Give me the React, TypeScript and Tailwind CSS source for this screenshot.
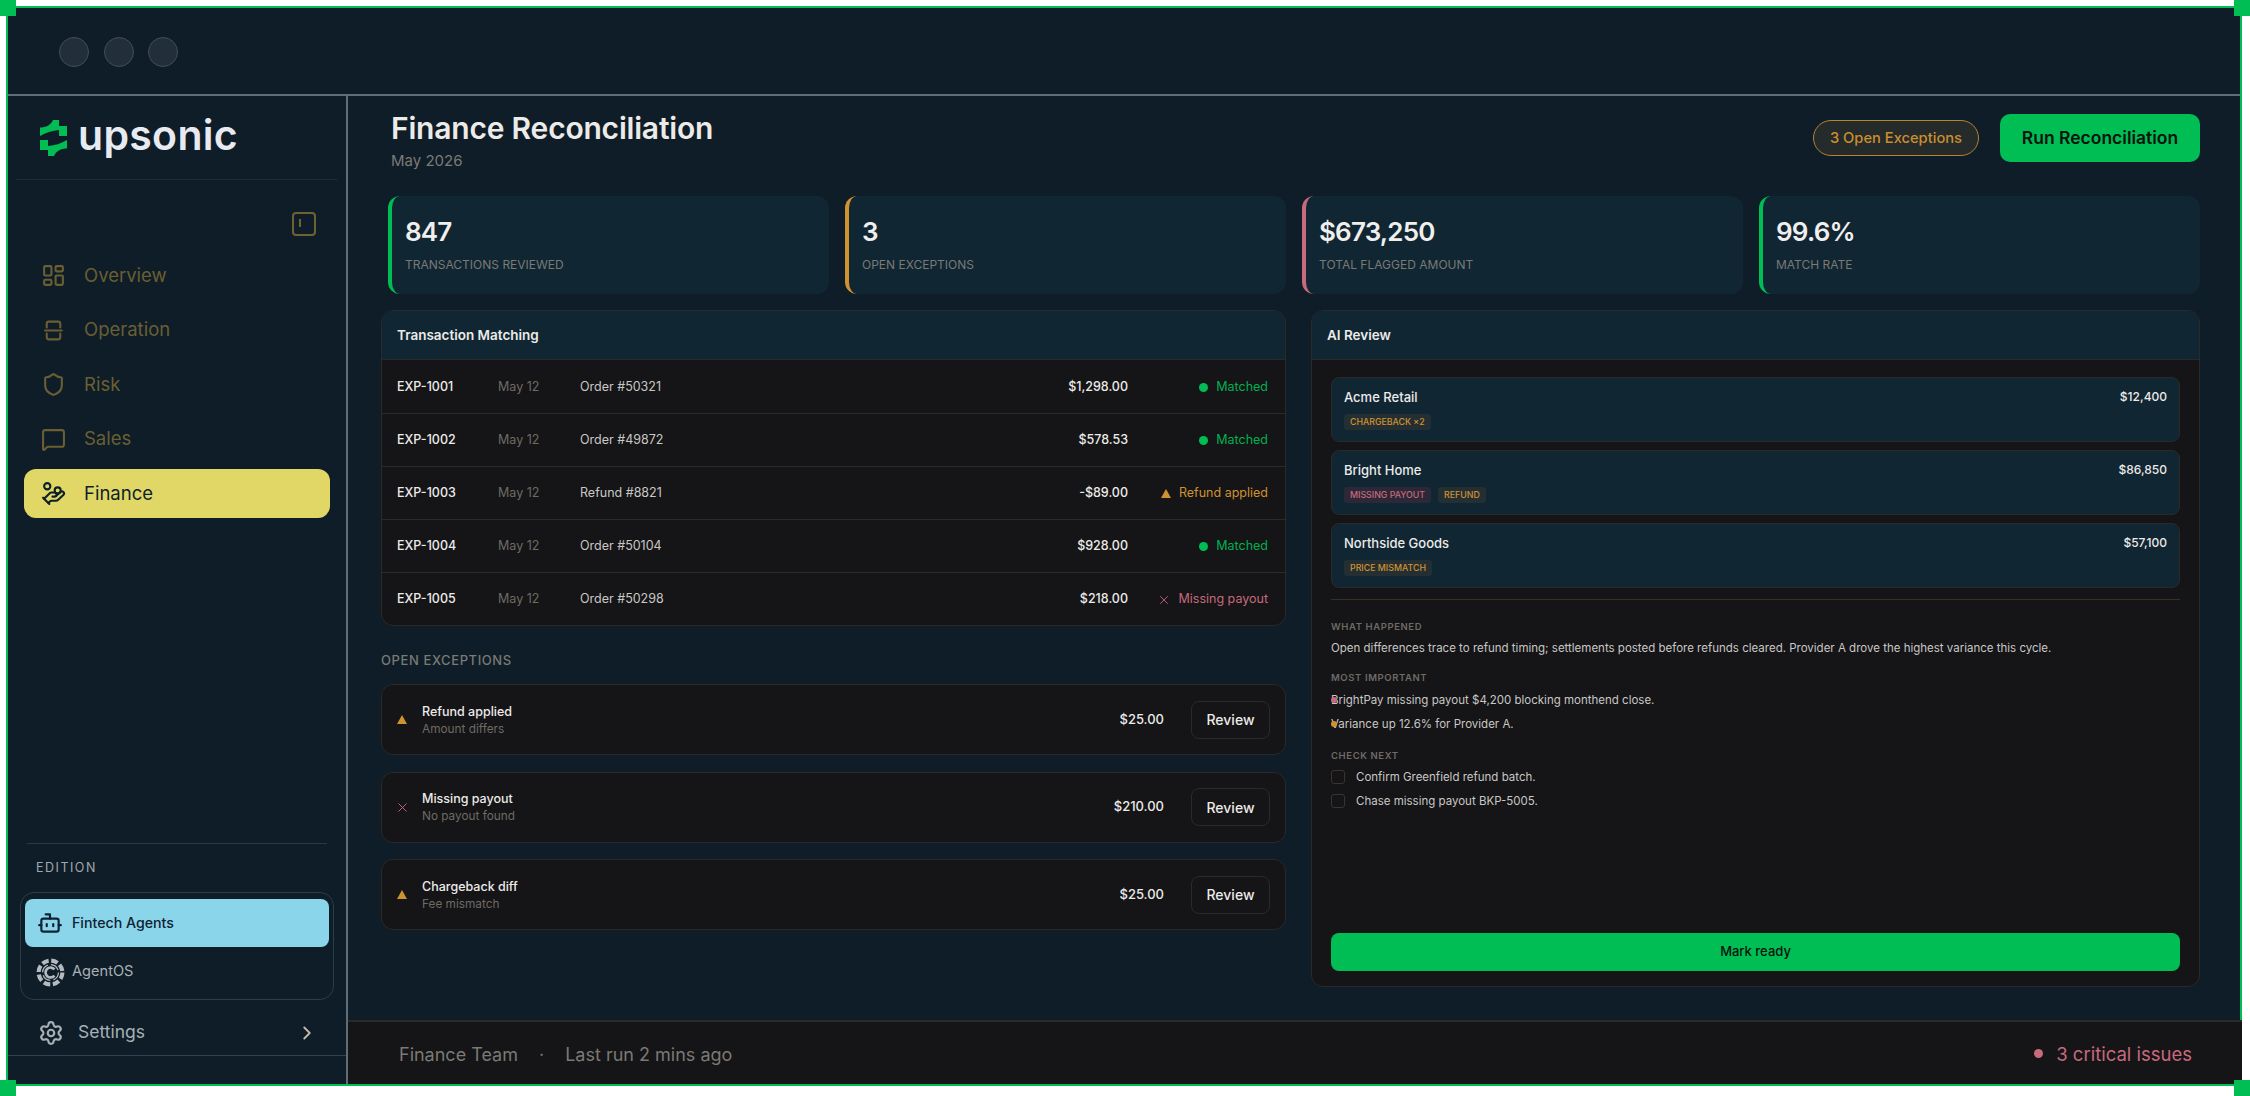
import React from 'react';
import { Bot, ChevronRight, HandCoins, LayoutDashboard, MessageSquare, Settings, Shield, X } from 'lucide-react';

const OperationIcon = ({ className }: { className?: string }) => (
  <svg viewBox="0 0 24 24" fill="none" stroke="currentColor" strokeWidth="2" strokeLinecap="round" strokeLinejoin="round" className={className}>
    <path d="M5.5 9V5.5a2 2 0 0 1 2-2h9a2 2 0 0 1 2 2V9" />
    <path d="M4 12h16" />
    <path d="M5.5 15v3.5a2 2 0 0 0 2 2h9a2 2 0 0 0 2-2V15" />
  </svg>
);

const LogoMark = () => (
  <svg viewBox="0 0 27 36" className="w-[27px] h-[36px]" fill="#00bd54">
    <path d="M0 7.5C6 7.5 11 5 13 0H19V6H27V16H19V10C12 10.5 6 12.5 0 16Z" />
    <path d="M27 28.5C21 28.5 16 31 14 36H8V30H0V20H8V26C15 25.5 21 23.5 27 20Z" />
  </svg>
);

const AgentOsIcon = () => (
  <svg viewBox="0 0 28 28" className="w-[29px] h-[29px]" fill="none" stroke="#b4bac0">
    <circle cx="14" cy="14" r="11.5" strokeWidth="4" strokeDasharray="6.5 2.6" />
    <circle cx="14" cy="14" r="7.6" strokeWidth="1.2" strokeDasharray="9 3" />
    <path d="M17.8 11a4.8 4.8 0 1 0 0 6" strokeWidth="2.6" />
  </svg>
);

const Triangle = ({ className }: { className?: string }) => (
  <span className={`w-0 h-0 border-l-[5px] border-r-[5px] border-b-[9px] border-l-transparent border-r-transparent border-b-[#cf9230] ${className ?? ''}`} />
);

const navItems = [
  { label: 'Overview', Icon: LayoutDashboard },
  { label: 'Operation', Icon: OperationIcon },
  { label: 'Risk', Icon: Shield },
  { label: 'Sales', Icon: MessageSquare },
];

const stats = [
  { value: '847', label: 'Transactions reviewed', border: 'border-l-[#00bd54]' },
  { value: '3', label: 'Open exceptions', border: 'border-l-[#cf9230]' },
  { value: '$673,250', label: 'Total flagged amount', border: 'border-l-[#c76a7c]' },
  { value: '99.6%', label: 'Match rate', border: 'border-l-[#00bd54]' },
];

const transactions = [
  { id: 'EXP-1001', desc: 'Order #50321', amount: '$1,298.00', status: 'Matched', kind: 'ok' },
  { id: 'EXP-1002', desc: 'Order #49872', amount: '$578.53', status: 'Matched', kind: 'ok' },
  { id: 'EXP-1003', desc: 'Refund #8821', amount: '-$89.00', status: 'Refund applied', kind: 'warn' },
  { id: 'EXP-1004', desc: 'Order #50104', amount: '$928.00', status: 'Matched', kind: 'ok' },
  { id: 'EXP-1005', desc: 'Order #50298', amount: '$218.00', status: 'Missing payout', kind: 'bad' },
];

const exceptions = [
  { title: 'Refund applied', sub: 'Amount differs', amount: '$25.00', kind: 'warn' },
  { title: 'Missing payout', sub: 'No payout found', amount: '$210.00', kind: 'bad' },
  { title: 'Chargeback diff', sub: 'Fee mismatch', amount: '$25.00', kind: 'warn' },
];

const companies = [
  { name: 'Acme Retail', amount: '$12,400', tags: [{ text: 'Chargeback ×2', bad: false }] },
  { name: 'Bright Home', amount: '$86,850', tags: [{ text: 'Missing payout', bad: true }, { text: 'Refund', bad: false }] },
  { name: 'Northside Goods', amount: '$57,100', tags: [{ text: 'Price mismatch', bad: false }] },
];

const App = () => {
  return (
    <div className="relative w-[2250px] h-[1096px] overflow-hidden bg-white font-['Inter',sans-serif] text-[#ecebe8]">
      {/* selection handles */}
      <div className="absolute left-0 top-0 w-4 h-4 bg-[#00bd54]" />
      <div className="absolute right-0 top-0 w-4 h-4 bg-[#00bd54]" />
      <div className="absolute left-0 bottom-0 w-4 h-4 bg-[#00bd54]" />
      <div className="absolute right-0 bottom-0 w-4 h-4 bg-[#00bd54]" />

      <div className="ml-[6px] mt-[6px] w-[2236px] h-[1080px] border-2 border-[#00bd54] bg-[#0e1d28] flex flex-col">
        {/* window bar */}
        <div className="h-[88px] shrink-0 flex items-center gap-[14.5px] pl-[51px] pt-[2px] border-b-2 border-[#5f6d78]">
          {[0, 1, 2].map((i) => (
            <span key={i} className="w-[30px] h-[30px] rounded-full bg-[#222e39] border border-[#424e58]" />
          ))}
        </div>

        <div className="flex-1 flex min-h-0">
          {/* Sidebar */}
          <aside className="w-[340px] shrink-0 border-r-2 border-[#5f6d78] flex flex-col">
            <div className="h-[84px] mx-[8px] border-b border-[#1d2a32] flex items-center gap-[11px] pl-[24px]">
              <LogoMark />
              <span className="text-[41px] leading-none font-semibold tracking-[0.3px] text-[#e8eaf2] relative -top-[2px]">upsonic</span>
            </div>
            <div className="flex justify-end pr-[30px] pt-[32px]">
              <svg viewBox="0 0 24 24" fill="none" stroke="#6e6233" strokeWidth="2" className="w-[24px] h-[24px]">
                <rect x="1" y="1" width="22" height="22" rx="3" />
                <path d="M8 7v8" />
              </svg>
            </div>
            <nav className="mt-[15px] px-[16px] flex flex-col gap-[5.5px]">
              {navItems.map(({ label, Icon }) => (
                <div key={label} className="h-[49px] flex items-center gap-[18px] pl-[17px] text-[18.5px] text-[#6a5f33]">
                  <Icon className="w-[25px] h-[25px]" />
                  <span>{label}</span>
                </div>
              ))}
              <div className="h-[49px] flex items-center gap-[18px] pl-[17px] rounded-[12px] bg-[#e0d766] text-[18.5px] text-[#0e1f2a]">
                <HandCoins className="w-[25px] h-[25px]" />
                <span>Finance</span>
              </div>
            </nav>

            <div className="mt-auto">
              <div className="mx-[19px] border-t border-[#2a3a45] pt-[16px] pb-[16px] pl-[9px] text-[12.5px] leading-[16px] tracking-[1.5px] text-[#a0a8ae]">EDITION</div>
              <div className="mx-[12px] h-[108px] rounded-[14px] border border-[#2d3d48] px-[4px] py-[6px]">
                <div className="h-[48px] rounded-[8px] bg-[#8bd5ea] flex items-center gap-[9px] pl-[12px] text-[14.2px] font-medium text-[#0e2233]">
                  <Bot className="w-[26px] h-[26px]" />
                  <span>Fintech Agents</span>
                </div>
                <div className="h-[50px] flex items-center gap-[7px] pl-[11px] text-[14.6px] text-[#a8b0b6]">
                  <AgentOsIcon />
                  <span>AgentOS</span>
                </div>
              </div>
              <div className="h-[56px] pt-[10px] border-b border-[#33424e] flex items-center pl-[30px] pr-[28px] text-[17.5px] text-[#a8b0b6]">
                <Settings className="w-[26px] h-[26px]" />
                <span className="ml-[14px]">Settings</span>
                <ChevronRight className="ml-auto w-[22px] h-[22px] text-[#c5bba8]" />
              </div>
              <div className="h-[28px]" />
            </div>
          </aside>

          {/* Main */}
          <main className="flex-1 flex flex-col min-w-0">
            <div className="flex-1 pl-[33px] pr-[40px]">
              <header className="h-[100px] pl-[10px] flex justify-between">
                <div className="pt-[14px]">
                  <h1 className="text-[30px] leading-[36px] font-semibold tracking-[-0.2px] text-[#ecebe8]">Finance Reconciliation</h1>
                  <p className="mt-[5px] text-[15px] leading-[20px] text-[#7c7a74]">May 2026</p>
                </div>
                <div className="flex items-start gap-[21px] pt-[18px]">
                  <span className="mt-[6px] h-[36px] w-[166px] rounded-full border-[1.5px] border-[#b8822f] bg-[#252a2a] flex items-center justify-center text-[14.7px] font-medium text-[#c98f2e]">3 Open Exceptions</span>
                  <button className="h-[48px] w-[200px] rounded-[10px] bg-[#00bd54] text-[17.5px] font-semibold text-[#07130c]">Run Reconciliation</button>
                </div>
              </header>

              <div className="ml-[7px] grid grid-cols-4 gap-[16px]">
                {stats.map((s) => (
                  <div key={s.label} className={`h-[98px] rounded-[12px] bg-[#112633] border-l-4 ${s.border} pl-[13px] pt-[19px]`}>
                    <div className="text-[26px] leading-[34px] font-semibold tracking-[-0.8px] text-[#f1efed]">{s.value}</div>
                    <div className="mt-[8px] text-[12px] leading-[16px] uppercase text-[#7a7a74]">{s.label}</div>
                  </div>
                ))}
              </div>

              <div className="mt-[16px] grid grid-cols-[905px_889px] gap-[25px]">
                {/* Left column */}
                <div>
                  <section className="rounded-[12px] border border-[#2a2a28] overflow-hidden bg-[#151417]">
                    <div className="h-[49px] bg-[#112633] border-b border-[#2a2a28] flex items-center pl-[15px] pt-[1px] text-[13.5px] font-semibold">Transaction Matching</div>
                    {transactions.map((t, i) => (
                      <div key={t.id} className={`h-[53px] flex items-center pl-[15px] pr-[17px] pt-[1px] text-[12.5px] ${i > 0 ? 'border-t border-[#2a2a28]' : ''}`}>
                        <span className="w-[101px] font-medium">{t.id}</span>
                        <span className="w-[82px] text-[#6e6b64]">May 12</span>
                        <span className="text-[#c8c8c4]">{t.desc}</span>
                        <span className="ml-auto font-medium">{t.amount}</span>
                        <span className={`w-[140px] flex items-center justify-end gap-[8px] ${t.kind === 'ok' ? 'text-[#00b050]' : t.kind === 'warn' ? 'text-[#cf9230]' : 'text-[#c76a7c]'}`}>
                          {t.kind === 'ok' && <span className="w-[9px] h-[9px] rounded-full bg-[#00bd54]" />}
                          {t.kind === 'warn' && <Triangle />}
                          {t.kind === 'bad' && <X className="w-[14px] h-[14px]" strokeWidth={1.5} />}
                          {t.status}
                        </span>
                      </div>
                    ))}
                  </section>

                  <div className="mt-[25px] text-[13px] leading-[18px] font-medium uppercase tracking-[0.6px] text-[#7a7a74]">Open exceptions</div>

                  <div className="mt-[15px] flex flex-col gap-[16.5px]">
                    {exceptions.map((e) => (
                      <div key={e.title} className="h-[71px] rounded-[12px] border border-[#2a2a28] bg-[#151417] flex items-center pl-[15px] pr-[15px]">
                        <span className="w-[25px] flex items-center">
                          {e.kind === 'warn' ? <Triangle /> : <X className="w-[15px] h-[15px] -ml-[2px] text-[#c76a7c]" strokeWidth={1.5} />}
                        </span>
                        <div>
                          <div className="text-[12.5px] leading-[18px] font-medium">{e.title}</div>
                          <div className="text-[11.8px] leading-[16px] text-[#6e6b64]">{e.sub}</div>
                        </div>
                        <span className="ml-auto text-[13px] font-medium">{e.amount}</span>
                        <button className="ml-[27px] h-[38px] w-[79px] rounded-[8px] border border-[#2c2a28] text-[14px] font-medium">Review</button>
                      </div>
                    ))}
                  </div>
                </div>

                {/* Right column */}
                <section className="h-[677px] rounded-[12px] border border-[#2a2a28] overflow-hidden bg-[#151417] flex flex-col">
                  <div className="h-[49px] shrink-0 bg-[#112633] border-b border-[#2a2a28] flex items-center pl-[15px] pt-[1px] text-[13.5px] font-semibold">AI Review</div>
                  <div className="flex-1 px-[19px] pt-[17px] pb-[15px] flex flex-col">
                    <div className="flex flex-col gap-[8px]">
                      {companies.map((c) => (
                        <div key={c.name} className="h-[65px] rounded-[8px] border border-[#2a2a28] bg-[#112633] pl-[12px] pr-[12px] pt-[10px]">
                          <div className="flex justify-between items-center text-[13px] leading-[18px] font-medium">
                            <span>{c.name}</span>
                            <span className="text-[12px]">{c.amount}</span>
                          </div>
                          <div className="mt-[8px] flex gap-[7px]">
                            {c.tags.map((tag) => (
                              <span key={tag.text} className={`h-[16px] px-[6px] rounded-[3px] flex items-center text-[8.8px] font-medium uppercase ${tag.bad ? 'bg-[#2c2837] text-[#c76a7c]' : 'bg-[#242f33] text-[#cf9230]'}`}>{tag.text}</span>
                            ))}
                          </div>
                        </div>
                      ))}
                    </div>
                    <div className="mt-[11px] border-t border-[#3a2f22]" />

                    <div className="mt-[20px] text-[9.5px] leading-[14px] font-semibold uppercase tracking-[0.6px] text-[#6e6b64]">What happened</div>
                    <p className="mt-[5px] text-[11.5px] leading-[18px] text-[#c8c8c4]">Open differences trace to refund timing; settlements posted before refunds cleared. Provider A drove the highest variance this cycle.</p>

                    <div className="mt-[14px] text-[9.5px] leading-[14px] font-semibold uppercase tracking-[0.6px] text-[#6e6b64]">Most important</div>
                    <div className="relative mt-[6px] text-[11.5px] leading-[18px] text-[#c8c8c4]">
                      <span className="absolute left-0 top-[6px] w-[6px] h-[6px] rounded-full bg-[#c76a7c]" />
                      BrightPay missing payout $4,200 blocking monthend close.
                    </div>
                    <div className="relative mt-[6px] text-[11.5px] leading-[18px] text-[#c8c8c4]">
                      <span className="absolute left-0 top-[6px] w-[6px] h-[6px] rounded-full bg-[#cf9230]" />
                      Variance up 12.6% for Provider A.
                    </div>

                    <div className="mt-[16px] text-[9.5px] leading-[14px] font-semibold uppercase tracking-[0.6px] text-[#6e6b64]">Check next</div>
                    <div className="mt-[5px] flex flex-col gap-[6px] text-[11.5px] leading-[18px] text-[#c8c8c4]">
                      {['Confirm Greenfield refund batch.', 'Chase missing payout BKP-5005.'].map((item) => (
                        <div key={item} className="flex items-center gap-[11px]">
                          <span className="w-[14px] h-[14px] rounded-[3px] border border-[#39342d]" />
                          {item}
                        </div>
                      ))}
                    </div>

                    <button className="mt-auto h-[38px] rounded-[8px] bg-[#00bd54] text-[13px] font-medium text-[#07130c]">Mark ready</button>
                  </div>
                </section>
              </div>
            </div>

            {/* Footer */}
            <footer className="h-[64px] shrink-0 -mr-[2px] pt-[3px] border-t-2 border-[#2a2a28] bg-[#151417] flex items-center pl-[51px] pr-[50px] text-[18px] text-[#7a7a74]">
              <span>Finance Team</span>
              <span className="mx-[21px]">·</span>
              <span>Last run 2 mins ago</span>
              <span className="ml-auto flex items-center gap-[13px] text-[18.5px] text-[#c76a7c]">
                <span className="w-[9px] h-[9px] rounded-full bg-[#c76a7c] relative -top-[1px]" />
                3 critical issues
              </span>
            </footer>
          </main>
        </div>
      </div>
    </div>
  );
};

export default App;
